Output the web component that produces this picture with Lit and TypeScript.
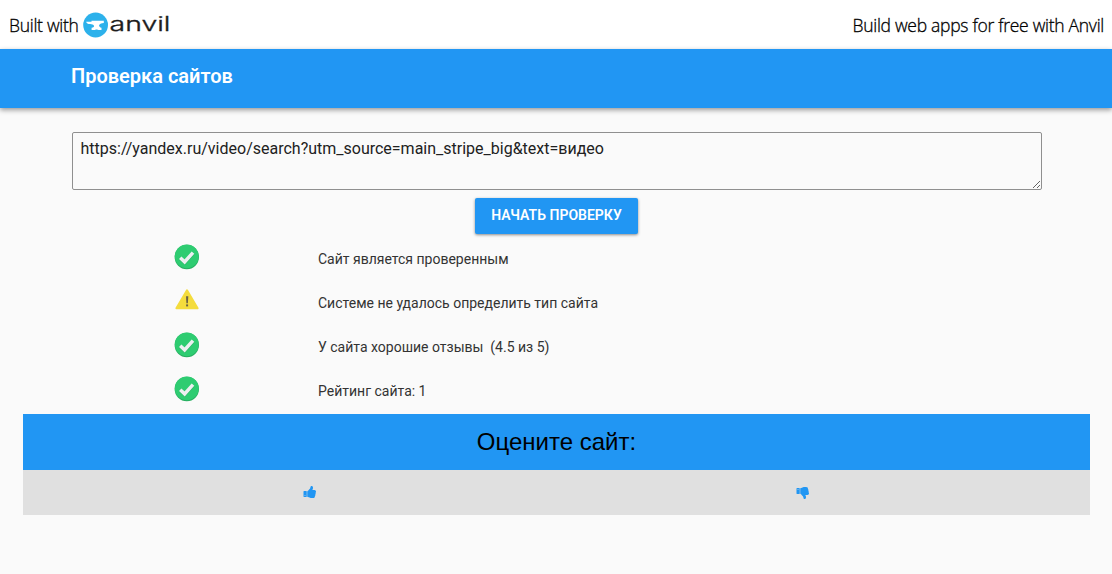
import { LitElement, html, css, svg } from "lit";
import { customElement, property } from "lit/decorators.js";

type Status = "ok" | "warn";

const THUMB =
  "M320 1344q0-26-19-45t-45-19q-27 0-45.5 19t-18.5 45q0 27 18.5 45.5t45.5 18.5q26 0 45-18.5t19-45.5zm160-512v640q0 26-19 45t-45 19h-288q-26 0-45-19t-19-45v-640q0-26 19-45t45-19h288q26 0 45 19t19 45zm1184 0q0 86-55 149 15 44 15 76 3 76-43 137 17 56 0 117-15 57-54 94 9 112-49 181-64 76-197 78h-129q-66 0-144-15.5t-121.5-29-120.5-39.5q-123-43-158-44-26-1-45-19.5t-19-44.5v-641q0-25 18-43.5t43-20.5q24-2 76-59t101-121q68-87 101-120 18-18 31-48t17.5-48.5 13.5-60.5q7-39 12.5-61t19.5-52 34-50q19-19 45-19 46 0 82.5 10.5t60 26 40 40.5 24 45 12 50 5 45 .5 39q0 38-9.5 76t-19 60-27.5 56q-3 6-10 18t-11 22-8 24h277q78 0 135 57t57 135z";

@customElement("status-icon")
class StatusIcon extends LitElement {
  @property() status: Status = "ok";

  static styles = css`
    :host { display: block; width: 26px; height: 26px; }
    svg { display: block; }
  `;

  render() {
    const shape =
      this.status === "ok"
        ? svg`<circle cx="12.8" cy="13" r="12.2" fill="#27ae60"/>
            <circle cx="12.8" cy="12.4" r="11.9" fill="#2ecc71"/>
            <path d="M6.2 13.8 10.6 17.9 19 8.6" fill="none" stroke="#27ae60" stroke-width="3.5" transform="translate(0 .7)"/>
            <path d="M6.2 13.8 10.6 17.9 19 8.6" fill="none" stroke="#ecf0f1" stroke-width="3.5"/>`
        : svg`<path d="M13 2.3 23.6 20.3H2.4Z" fill="#f4dc3d" stroke="#f4dc3d" stroke-width="2" stroke-linejoin="round"/>
            <path d="M12 8.2h2.3l-.4 7h-1.5Z" fill="#6a6145"/>
            <rect x="12.1" y="16.4" width="2" height="2" fill="#6a6145"/>`;
    return html`<svg width="26" height="26" viewBox="0 0 26 26">${shape}</svg>`;
  }
}

@customElement("app-root")
class AppRoot extends LitElement {
  private results: { status: Status; text: string }[] = [
    { status: "ok", text: "Сайт является проверенным" },
    { status: "warn", text: "Системе не удалось определить тип сайта" },
    { status: "ok", text: "У сайта хорошие отзывы  (4.5 из 5)" },
    { status: "ok", text: "Рейтинг сайта: 1" },
  ];

  static styles = css`
    :host {
      display: block;
      min-height: 574px;
      background: #fafafa;
      font-family: Roboto, "Noto Sans", sans-serif;
      font-size: 14px;
      color: #333;
    }
    * { box-sizing: border-box; }
    .banner {
      display: flex;
      justify-content: space-between;
      align-items: center;
      height: 49px;
      padding: 0 8px 0 9px;
      background: #fff;
      color: #000;
      font: 300 17.5px/24px "Open Sans", sans-serif;
      letter-spacing: -.28px;
      -webkit-text-stroke: .3px #000;
    }
    .built { display: flex; align-items: center; gap: 4px; }
    .built span { width: 70px; white-space: nowrap; }
    .logo { display: block; overflow: visible; }
    .wordmark { font: 300 20px Inter, sans-serif; fill: #1c1c1c; stroke: #1c1c1c; stroke-width: .35; letter-spacing: 0; -webkit-text-stroke: 0; }
    .appbar {
      height: 59px;
      padding: 12px 71px;
      background: #2196f3;
      color: #fff;
      box-shadow: 0 2px 5px rgba(0, 0, 0, .4);
    }
    h1 { margin: 0; font-size: 20px; line-height: 30px; font-weight: 600; }
    .content { padding: 24px 70px 0 72px; }
    textarea {
      display: block;
      width: 970px;
      height: 58px;
      padding: 6px 7.5px;
      border: 1px solid #8f8f8f;
      border-radius: 2px;
      background: transparent;
      color: #212121;
      font: 16px/20px Roboto, sans-serif;
      resize: both;
      outline: none;
    }
    .check {
      display: block;
      width: 163px;
      height: 36px;
      margin: 8px auto 0 403px;
      padding: 0 0 1px;
      border: 0;
      border-radius: 2px;
      background: #2196f3;
      color: #fff;
      font: 600 14px/35px Roboto, sans-serif;
      text-transform: uppercase;
      box-shadow: 0 1px 3px rgba(0, 0, 0, .45);
    }
    .results { display: grid; grid-auto-rows: 44px; padding-top: 1px; }
    .row { display: grid; grid-template-columns: 246px 1fr; align-items: center; }
    .row status-icon { margin: 0 0 1px 102px; }
    .row p { margin: 4px 0 0; line-height: 20px; white-space: pre; }
    .rate { margin: 3px 22px 0 23px; }
    .rate-title {
      height: 56px;
      background: #2196f3;
      color: #000;
      font: 24px/56px "Liberation Sans", sans-serif;
      text-align: center;
    }
    .votes { display: flex; height: 45px; background: #e0e0e0; }
    .vote {
      display: flex;
      align-items: center;
      padding: 0 0 1px 280px;
      width: 493px;
      height: 45px;
      border: 0;
      background: none;
    }
    .vote svg { display: block; width: 14px; height: 14px; fill: #2196f3; }
    .down { padding: 1px 0 0 280px; }
    .down svg { transform: scaleY(-1); }
  `;

  private thumb() {
    return html`<svg viewBox="0 0 1792 1792"><path d=${THUMB}></path></svg>`;
  }

  render() {
    return html`
      <header class="banner">
        <div class="built">
          <span>Built with</span>
          <svg class="logo" width="90" height="26" viewBox="0 0 90 26">
            <circle cx="12.6" cy="13" r="12.4" fill="#2cb1eb"/>
            <path fill="#fff" d="M8.5 8.7h12.3v2.2c-2.7.3-4.4 1.1-4.7 2.4-.2 1.2.8 2.2 2.4 2.5v2.1h-3.2c-.3-.7-3.1-.7-3.4 0H8.6v-2.1c2-.5 2.8-1.3 2.4-2.1-.4-.9-2.2-1.4-3.9-1.6-2.2-.2-3.6-.9-4-2.4h5.4Z"/>
            <text class="wordmark" x="26.5" y="19" textLength="61" lengthAdjust="spacingAndGlyphs">anvil</text>
          </svg>
        </div>
        <div>Build web apps for free with Anvil</div>
      </header>
      <div class="appbar"><h1>Проверка сайтов</h1></div>
      <main>
        <div class="content">
          <textarea spellcheck="false" .value=${"https://yandex.ru/video/search?utm_source=main_stripe_big&text=видео"}></textarea>
          <button class="check">Начать проверку</button>
          <div class="results">
            ${this.results.map(
              (r) => html`<div class="row"><status-icon .status=${r.status}></status-icon><p>${r.text}</p></div>`
            )}
          </div>
        </div>
        <section class="rate">
          <div class="rate-title">Оцените сайт:</div>
          <div class="votes">
            <button class="vote up">${this.thumb()}</button>
            <button class="vote down">${this.thumb()}</button>
          </div>
        </section>
      </main>
    `;
  }
}
